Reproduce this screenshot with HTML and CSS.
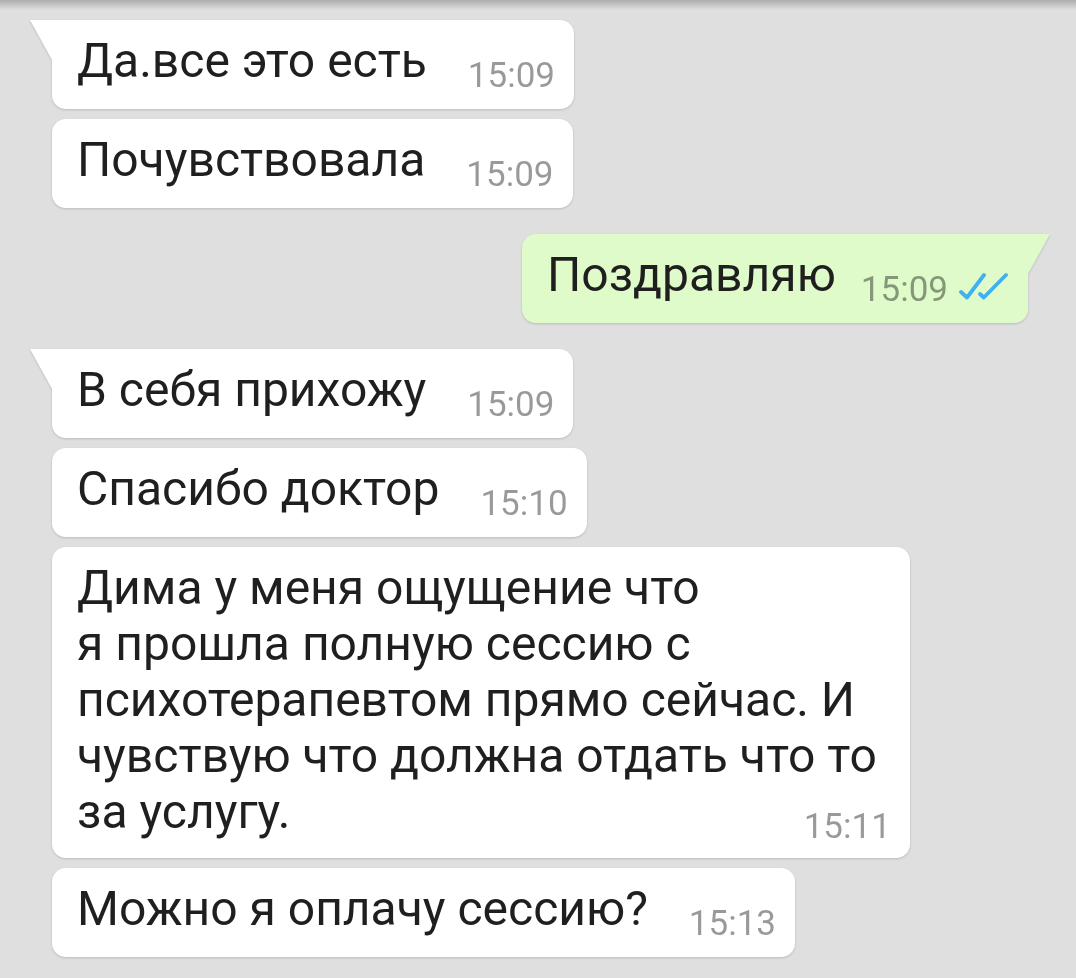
FILE: index.html
```html
<!DOCTYPE html>
<html>
    <head>
        <meta http-equiv="Content-Type" content="text/html; charset=utf-8;" />
        <title>Чат</title>
        <link rel="stylesheet" href="styles.css">
    </head>

    <body>
        <div class="chat">
            <div class="msg in first">
                <div class="bubble tail">
                    <span class="text">Да.все это есть</span>
                    <span class="time">15:09</span>
                </div>
            </div>
            <div class="msg in">
                <div class="bubble">
                    <span class="text">Почувствовала</span>
                    <span class="time">15:09</span>
                </div>
            </div>

            <div class="msg out first">
                <div class="bubble tail">
                    <span class="text">Поздравляю</span>
                    <span class="time">15:09</span>
                    <svg class="ticks" width="52" height="28" viewBox="0 0 52 28">
                        <path d="M4 20 L10 25.5 L27 3" />
                        <path d="M23 22 L26.8 25.5 L49 3" />
                    </svg>
                </div>
            </div>

            <div class="msg in first">
                <div class="bubble tail">
                    <span class="text">В себя прихожу</span>
                    <span class="time">15:09</span>
                </div>
            </div>
            <div class="msg in">
                <div class="bubble">
                    <span class="text">Спасибо доктор</span>
                    <span class="time">15:10</span>
                </div>
            </div>
            <div class="msg in">
                <div class="bubble long">
                    <span class="text">Дима у меня ощущение что<br>я прошла полную сессию с<br>психотерапевтом прямо сейчас. И<br>чувствую что должна отдать что то<br>за услугу.</span>
                    <span class="time">15:11</span>
                </div>
            </div>
            <div class="msg in">
                <div class="bubble">
                    <span class="text">Можно я оплачу сессию?</span>
                    <span class="time">15:13</span>
                </div>
            </div>
        </div>
    </body>
</html>
```

FILE: styles.css
```css
* {
    margin: 0;
    padding: 0;
}
html, body {
    height: 100%;
}
body {
    background: #dfdfdf;
    font-family: Roboto, "Noto Sans", "Liberation Sans", sans-serif;
    color: #1f1f1f;
    overflow: hidden;
}
/* тень от тулбара сверху */
body::before {
    content: "";
    position: fixed;
    left: 0;
    right: 0;
    top: 0;
    height: 10px;
    background: linear-gradient(rgba(0, 0, 0, 0.22), rgba(0, 0, 0, 0));
}

.chat {
    display: flex;
    flex-direction: column;
    padding: 20px 48px 0 52px;
}
.msg {
    display: flex;
    margin-top: 10px;
}
.msg.first {
    margin-top: 26px;
}
.msg:first-child {
    margin-top: 0;
}
.msg.in {
    justify-content: flex-start;
}
.msg.out {
    justify-content: flex-end;
}

.bubble {
    position: relative;
    display: flex;
    align-items: flex-end;
    padding: 13px 19px 20px 25px;
    background: #fff;
    border-radius: 14px;
    filter: drop-shadow(0 1px 1px rgba(0, 0, 0, 0.16));
}
.out .bubble {
    background: #dffbca;
}
.bubble .text {
    font-size: 48px;
    line-height: 56px;
    white-space: nowrap;
}
.bubble .time {
    margin-left: 41px;
    font-size: 35px;
    line-height: 27px;
    color: rgba(0, 0, 0, 0.4);
    white-space: nowrap;
}
.out .bubble .time {
    margin-left: 25px;
}

/* длинное сообщение: время внизу справа под текстом */
.bubble.long {
    display: grid;
    padding-bottom: 18px;
}
.bubble.long .text,
.bubble.long .time {
    grid-area: 1 / 1;
}
.bubble.long .text {
    padding-right: 14px;
}
.bubble.long .time {
    justify-self: end;
    align-self: end;
}

.ticks {
    display: block;
    flex-shrink: 0;
    margin: 0 0 3px 9px;
    fill: none;
    stroke: #41b0ef;
    stroke-width: 3.8;
    stroke-linecap: round;
    stroke-linejoin: round;
}

/* хвостик у первого сообщения в группе */
.bubble.tail::before {
    content: "";
    position: absolute;
    top: 0;
    width: 24px;
    height: 40px;
    background: inherit;
}
.in .bubble.tail {
    border-top-left-radius: 0;
}
.in .bubble.tail::before {
    left: -22px;
    clip-path: polygon(0 0, 100% 0, 100% 100%, 92% 100%);
}
.out .bubble.tail {
    border-top-right-radius: 0;
}
.out .bubble.tail::before {
    right: -22px;
    clip-path: polygon(0 0, 100% 0, 8% 100%, 0 100%);
}
```
